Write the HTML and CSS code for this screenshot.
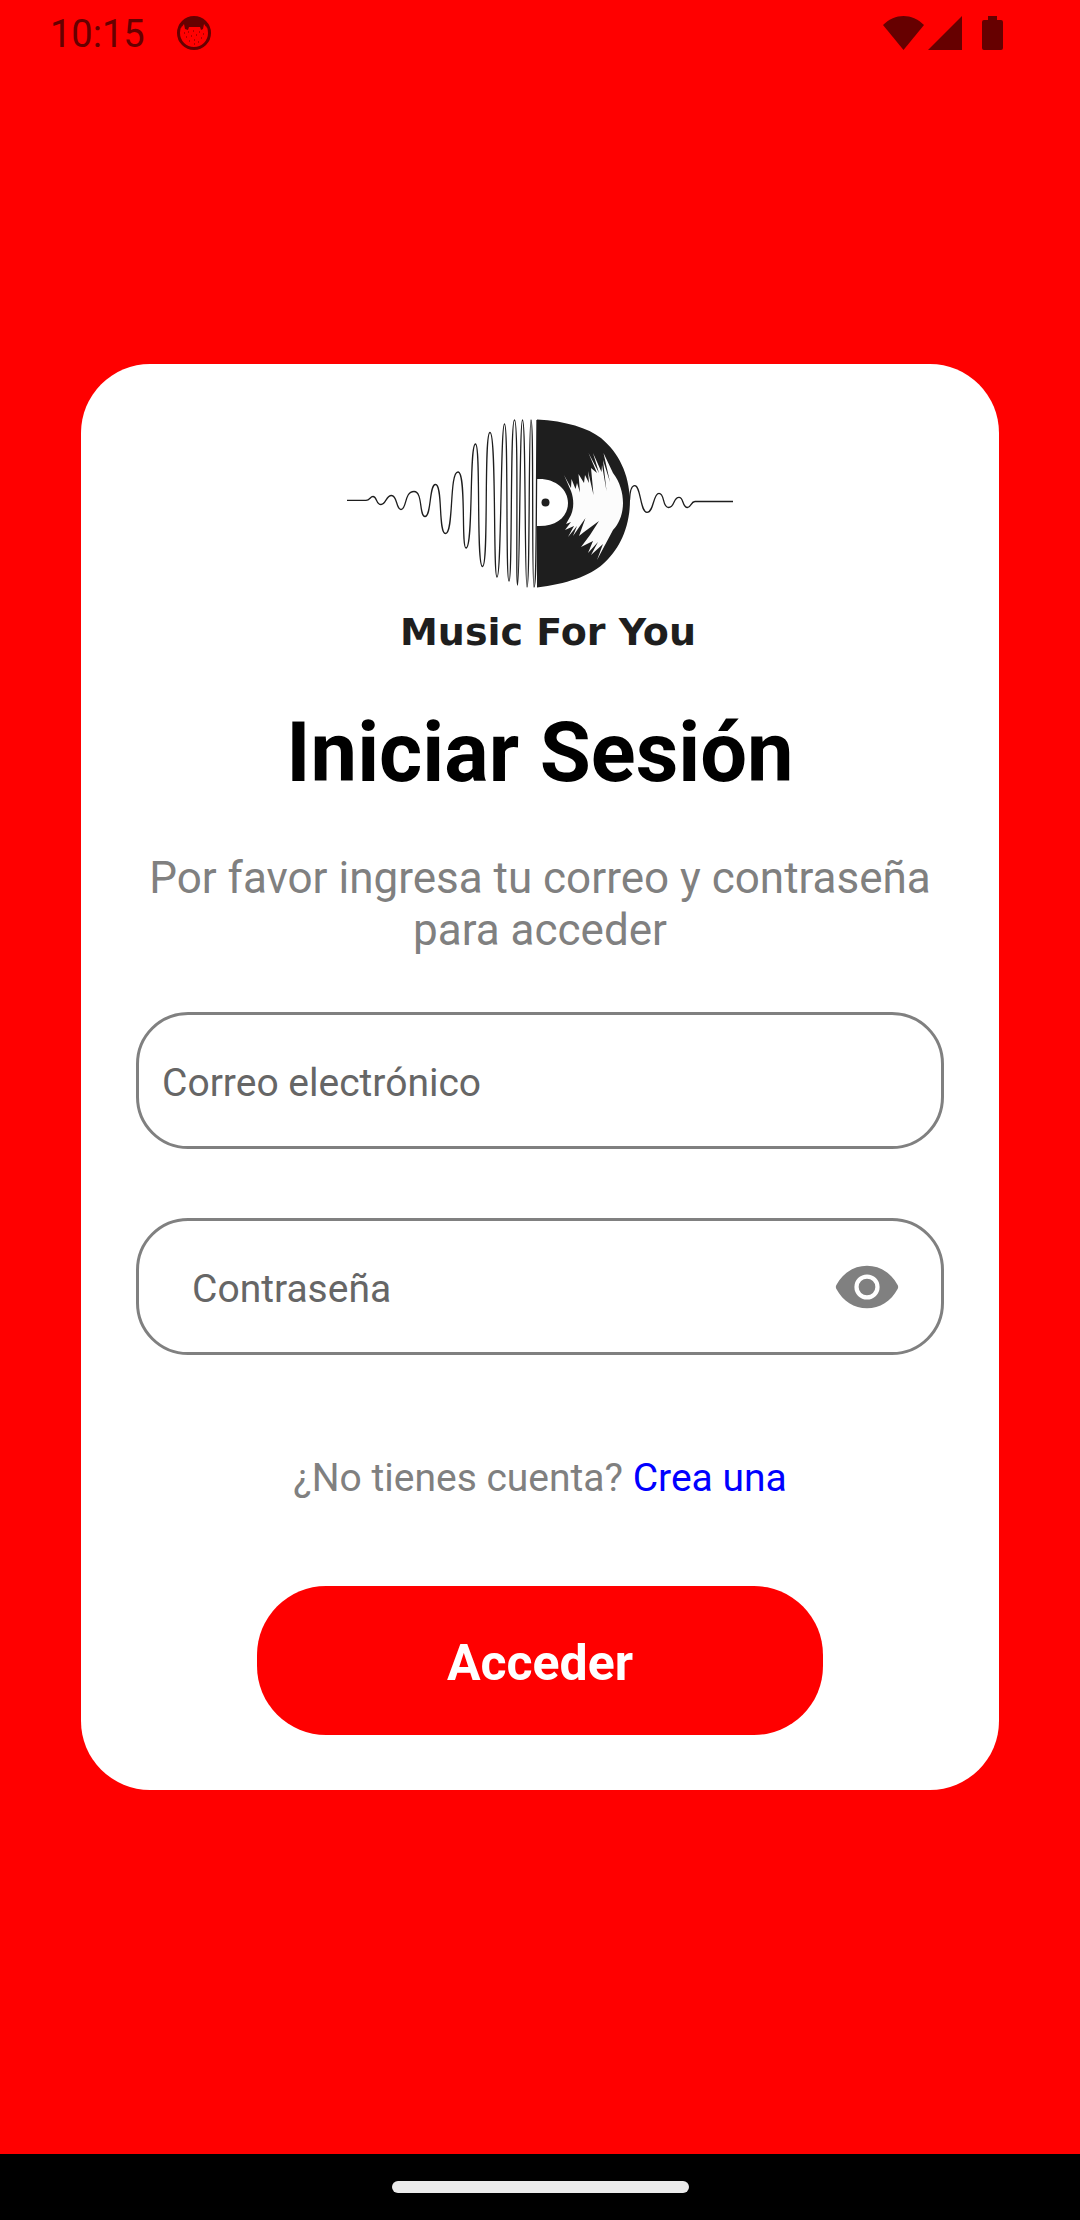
FILE: index.html
```html
<!DOCTYPE html>
<html lang="es">
<head>
  <meta charset="utf-8">
  <meta name="viewport" content="width=device-width, initial-scale=1">
  <title>Iniciar Sesión</title>
  <link rel="stylesheet" href="styles.css">
</head>
<body>
  <header class="status">
    <span class="clock">10:15</span>
    <svg class="face" viewBox="0 0 36 36" width="36" height="36" aria-hidden="true">
      <circle cx="18" cy="18" r="15.500" fill="none" stroke="currentColor" stroke-width="3"/>
      <path d="M5 13C7 5 12 2 18 2s11 3 13 11l-3-4-1 5-2 1-1-3H13l-1 3-3-1-1-5z" fill="currentColor"/>
      <path d="M8 18h1M12 17h1M17 16h1M23 17h1M27 19h1M10 22h1M15 21h1M20 20h1M25 23h1M13 26h1M18 25h1M22 27h1M18 29h1" stroke="currentColor" stroke-width="1"/>
    </svg>
    <svg class="signals" viewBox="0 0 120 36" width="120" height="36" fill="currentColor" aria-hidden="true">
      <path d="M0 10C12-2 29-2 41 10L20.500 35z"/>
      <path d="M79 1v34H45z"/>
      <path d="M105 1h9v4h4q2 0 2 2v26q0 2-2 2h-17q-2 0-2-2V7q0-2 2-2h4z"/>
    </svg>
  </header>

  <main class="screen">
    <form class="card">
      <div class="brand">
        <svg class="logo" viewBox="340 419 400 170" width="400" height="170" aria-hidden="true">
          <path class="wave" d="M347 500.300H366C370 500.300 370 496.500 373 496.500C377 496.500 376 504.500 381 504.500C386 504.500 386 495.500 391.500 495.500C397.500 495.500 396 509.500 401 509.500C407 509.500 404 491.500 414 491.500C423 491.500 419 516.500 425 516.500C431.500 516.500 429 484.500 435.500 484.500C443 484.500 438 533.500 445.500 533.500C454 533.500 449 472 458 472C466.500 472 461 548 466 548C473.500 548 469 444 475.500 444C481 444 476 566.500 482.500 566.500C489 566.500 483.500 432.500 490 432.500C496.500 432.500 493 577 497 577C501.500 577 500.500 424 504.500 424C508.500 424 505.500 581 509 581C512.500 581 510 420 514.500 420C519 420 515.500 585 517.500 585C520 585 519.500 420 522.500 420C526 420 524.500 587 527 587C530 587 528.500 420 531 420C534 420 531.500 587 534 587C536.500 587 536 540 537 420"/>
          <path class="ink" d="M537 419.500C566 421 588 428 601 438C619 453 629 474 630 500C630 529 618 551 603 564C590 576 566 584 537 587.500V526C556 527 568 517 568 503C568 489 555 478 537 479z"/>
          <circle class="ink" cx="545.500" cy="502.500" r="4"/>
          <path class="shine" d="M564 475L571 488 571.500 479 575.500 489 577 483 580 492.500 578.500 474 584 483 585 475 589 483 588 471 593.500 495 591 468 597 473 588.500 453 599 473 593 453 601.500 472 602 465 606.500 491 603 460 610 482 603.500 453 613 473C620 482 623 493 623 503C623 512 620 523 613 530L597 560 603 544 591 555 598 542 588 553 593 541 581 547 590 535 599 521 584 532 579 536 585.500 518 573 536 577 526 568 537 574 526 565 530 571 522 566 524 571 515C574 508 574 499 571 491z"/>
          <path class="wave" d="M629.500 500C630 490 632 485.700 634.700 485.700C641 485.700 640 512.300 647 512.300C654 512.300 653 493.300 659 493.300C665 493.300 662 507.500 668.500 507.500C675 507.500 673 497.300 679 497.300C684 497.300 682 507.500 687.500 507.500C691 507.500 691 501.500 695 501.500H733"/>
        </svg>
        <span class="brand-name">Music For You</span>
      </div>
      <h1 class="title">Iniciar Sesión</h1>
      <p class="intro">Por favor ingresa tu correo y contraseña para acceder</p>
      <div class="field">
        <input class="input" type="email" placeholder="Correo electrónico" aria-label="Correo electrónico">
      </div>
      <div class="field field-password">
        <input class="input" type="password" placeholder="Contraseña" aria-label="Contraseña">
        <button class="reveal" type="button" aria-label="Mostrar contraseña">
          <svg viewBox="0 0 24 24" width="68" height="68" aria-hidden="true">
            <path d="M1.200 12.700Q.8 12 1.200 11.300C3.500 7 7.500 4.500 12 4.500S20.500 7 22.800 11.300Q23.200 12 22.800 12.700C20.500 17 16.500 19.500 12 19.500S3.500 17 1.200 12.700z" fill="currentColor"/>
            <circle cx="12" cy="12" r="3.700" fill="none" stroke="#fff" stroke-width="1.500"/>
          </svg>
        </button>
      </div>
      <p class="signup">¿No tienes cuenta? <a class="signup-link" href="#registro">Crea una</a></p>
      <button class="submit" type="submit">Acceder</button>
    </form>
  </main>

  <footer class="navbar"><span class="handle"></span></footer>
</body>
</html>
```
FILE: styles.css
```css
* {
  box-sizing: border-box;
}

body {
  margin: 0;
  min-height: 100vh;
  display: flex;
  flex-direction: column;
  background: #f00;
  font-family: Roboto, sans-serif;
}

/* System bars */
.status {
  display: flex;
  align-items: center;
  height: 66px;
  padding: 0 77px 0 50px;
  color: #600;
}

.clock {
  padding-top: 2px;
  font-size: 38px;
  line-height: 44px;
}

.face {
  margin-left: 31px;
}

.signals {
  margin-left: auto;
}

.navbar {
  display: flex;
  align-items: center;
  justify-content: center;
  height: 66px;
  background: #000;
}

.handle {
  width: 297px;
  height: 12px;
  border-radius: 6px;
  background: #ebebeb;
}

/* Login card, centred between the system bars */
.screen {
  flex: 1;
  display: flex;
  align-items: center;
  justify-content: center;
  padding-bottom: 66px;
}

.card {
  width: 85%;
  display: flex;
  flex-direction: column;
  align-items: center;
  padding: 55px;
  border-radius: 69px;
  background: #fff;
}

.brand {
  display: flex;
  flex-direction: column;
  align-items: center;
}

.logo {
  display: block;
}

.wave {
  fill: none;
  stroke: #1e1e1e;
  stroke-width: 1.3;
}

.ink {
  fill: #1e1e1e;
}

.shine {
  fill: #fcfcfc;
}

.brand-name {
  margin-top: 19px;
  padding-left: 16px;
  color: #1e1e1e;
  font: bold 38px/48px "DejaVu Sans", sans-serif;
}

.title {
  margin: 48px 0 0;
  color: #000;
  font-size: 83px;
  font-weight: 700;
  line-height: 98px;
}

.intro {
  margin: 50px 0 56px;
  color: #808080;
  font-size: 44px;
  line-height: 52px;
  text-align: center;
}

.field {
  width: 100%;
  height: 137px;
  display: flex;
  align-items: center;
  padding: 0 23px;
  border: 3px solid #808080;
  border-radius: 52px;
}

.field-password {
  margin-top: 69px;
  padding: 0 40px 0 53px;
}

.input {
  flex: 1;
  min-width: 0;
  padding: 4px 0 0;
  border: 0;
  outline: 0;
  background: transparent;
  color: #000;
  font: 39px/46px Roboto, sans-serif;
}

.input::placeholder {
  color: #666;
  opacity: 1;
}

.reveal {
  display: flex;
  padding: 0;
  border: 0;
  background: none;
  color: #808080;
}

.signup {
  margin: 100px 0 85px;
  color: #808080;
  font-size: 39px;
  line-height: 46px;
}

.signup-link {
  color: #00f;
  text-decoration: none;
}

.submit {
  width: 70%;
  height: 149px;
  padding: 4px 0 0;
  border: 0;
  border-radius: 69px;
  background: #f00;
  color: #fff;
  font: bold 50px/60px Roboto, sans-serif;
}
```
